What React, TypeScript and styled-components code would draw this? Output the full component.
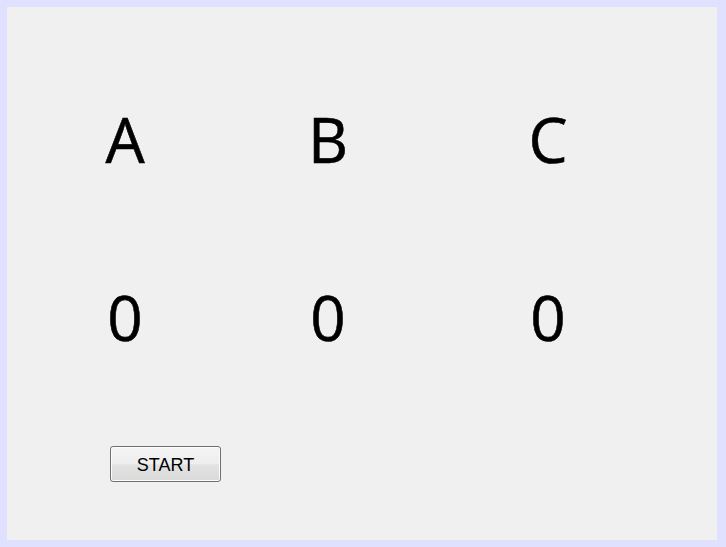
import styled, {createGlobalStyle} from "styled-components";

const GlobalStyle = createGlobalStyle`
  html, body {
    margin: 0;
    padding: 0;
    background: #e0e0ff;
  }
`;

const Frame = styled.div`
  width: 726px;
  height: 547px;
  padding: 7px 9px 7px 7px;
  box-sizing: border-box;
`;
const Panel = styled.div`
  height: 100%;
  background: #f0f0f0;
  padding: 101px 0 0 78px;
  box-sizing: border-box;
  display: flex;
  flex-direction: column;
`;
const Grid = styled.div`
  display: grid;
  grid-template-columns: 203px 220px 80px;
  row-gap: 116px;
`;
const Label = styled.div`
  width: 80px;
  text-align: center;
  font-family: "Open Sans", "DejaVu Sans", sans-serif;
  font-size: 62px;
  line-height: 62px;
  color: #000;
  -webkit-text-stroke: 0.6px #000;
`;
const StartButton = styled.button`
  margin: 98px 0 0 25px;
  width: 111px;
  height: 36px;
  padding: 2px 0 0 0;
  border: 1px solid #707070;
  border-radius: 3px;
  background: linear-gradient(#f4f4f4 0%, #eeeeee 50%, #e2e2e2 52%, #dadada 100%);
  box-shadow: inset 0 0 0 1px #fcfcfc;
  font-family: "Liberation Sans", Arial, sans-serif;
  font-size: 18px;
  color: #000;
  display: flex;
  align-items: center;
  justify-content: center;
`;

const names = ["A", "B", "C"];

function App() {
    const counts = [0, 0, 0];
    return (
        <>
            <GlobalStyle/>
            <Frame>
                <Panel>
                    <Grid>
                        {names.map((n) => (
                            <Label key={n}>{n}</Label>
                        ))}
                        {counts.map((c, i) => (
                            <Label key={i}>{c}</Label>
                        ))}
                    </Grid>
                    <StartButton>START</StartButton>
                </Panel>
            </Frame>
        </>
    );
}

export default App;
